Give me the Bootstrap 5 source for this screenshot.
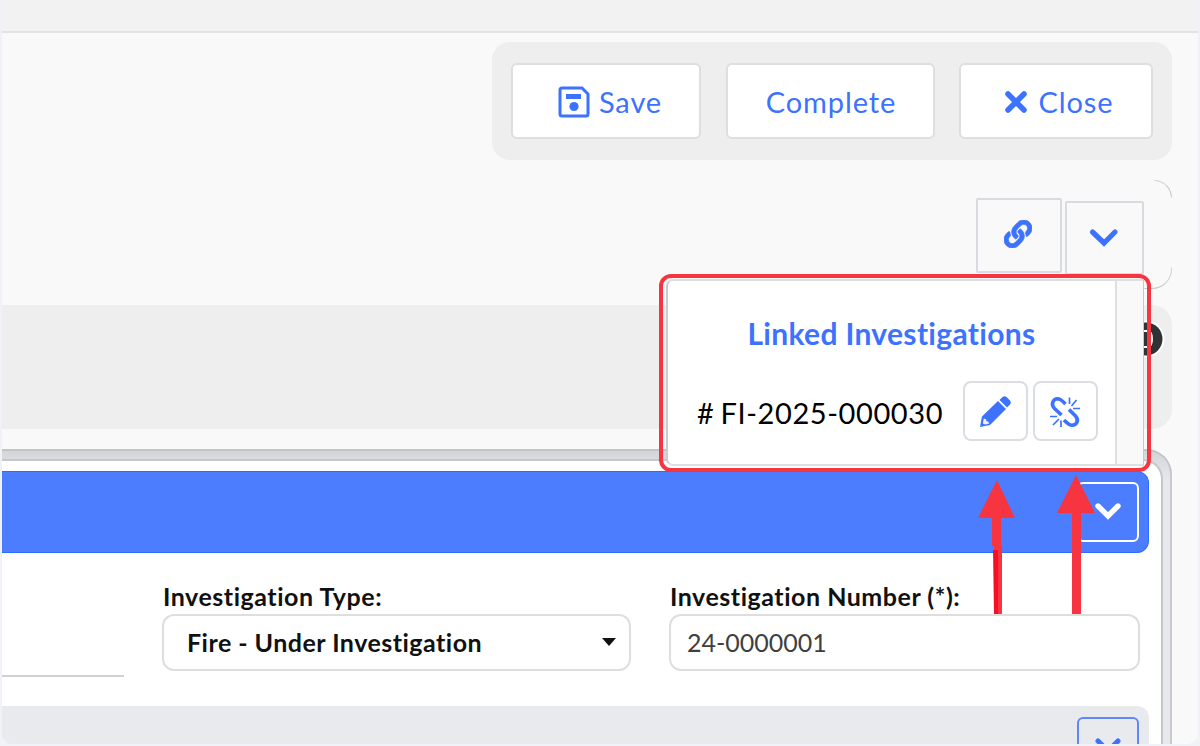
<!DOCTYPE html>
<html lang="en">
<head>
<meta charset="utf-8">
<meta name="viewport" content="width=device-width, initial-scale=1">
<title>Linked Investigations</title>
<link href="https://cdn.jsdelivr.net/npm/bootstrap@5.3.0/dist/css/bootstrap.min.css" rel="stylesheet">
<style>
  body { font-family: Lato, "Liberation Sans", sans-serif; background: #f1f1f8; height: 746px; overflow: hidden; color: #111; font-variant-ligatures: none; }
  .app-frame { margin: 0 2px; height: 744px; background: #f9f9f9; border-radius: 10px; }
  .top-strip { height: 33px; background: #f2f2f2; border-bottom: 2px solid #e2e2e2; }
  .action-bar { width: 680px; height: 118px; margin: 9px 26px 0 auto; padding: 21px 19px 0; background: #eee; border-radius: 18px; }
  .btn-action { height: 76px; background: #fff; border: 2px solid #dedede; border-radius: 6px; color: #3d72ff; font-size: 29px; letter-spacing: .9px; line-height: 1; padding: 0 0 0 2px; }
  .btn-action:hover { color: #3d72ff; background: #fff; border-color: #dedede; }
  .w-save { width: 190px; padding-left: 8px; } .w-complete { width: 209px; } .w-close { width: 194px; padding-left: 4px; }
  .link-row { height: 109px; margin: 20px 26px 0 0; padding: 18px 28px 0 0; }
  .arc { right: 0; width: 18px; height: 18px; border: 1px solid transparent; }
  .arc-top { top: 0; border-top-right-radius: 18px; border-top-color: #d2d2d2; border-right-color: #c4c4c4; }
  .arc-bottom { bottom: 0; width: 28px; height: 22px; border-bottom-right-radius: 20px; border-bottom-color: #c8c8c8; border-right-color: #d0d0d0; }
  .btn-square { background: #f9f9f9; border: 2px solid #d8dbdf; border-radius: 2px; padding: 0; }
  .btn-link-toggle { width: 86px; height: 75px; padding: 0 2px 4px 0; }
  .btn-expand { width: 79px; height: 74px; margin: 3px 0 0 3px; padding: 0 2px 2px 0; }
  .summary-band { height: 124px; margin: 16px 26px 0 0; background: #eee; border-radius: 0 20px 20px 0; }
  .info-dot { right: 7px; top: 15px; }
  .panel-shell { height: 295px; margin: 20px 26px 0 0; padding: 12px 11px 0 0; background: linear-gradient(#d2d4d8 0, #e8e9ee 34px); border-radius: 0 26px 0 0; box-shadow: inset 0 2px 0 #c2c4c6, inset -2px 0 0 #c9cacb; overflow: hidden; border-bottom-left-radius: 8px; }
  .panel-body { height: 283px; background: #fff; border-radius: 0 18px 0 0; padding: 10px 12px 0 0; box-shadow: 0 0 0 2px #c6c7c8; }
  .panel-head { height: 82px; background: #4d7dff; border: 1px solid #2b6bff; border-left: 0; border-radius: 0 12px 12px 0; padding: 10px 9px 0 0; }
  .btn-collapse { width: 62px; height: 60px; border: 2px solid #fff; border-radius: 6px; padding: 0 0 2px; }
  .fields { height: 153px; padding-top: 31px; }
  .stub-line { width: 122px; height: 93px; border-bottom: 2px solid #d1d1d1; margin-right: 38px; }
  .field-label { font-size: 25px; font-weight: 700; letter-spacing: .53px; line-height: 24px; height: 30px; padding-left: 1px; white-space: nowrap; }
  .field-box { height: 57px; border: 2px solid #dedede; border-radius: 12px; font-size: 25px; line-height: 28px; background: #fff; padding-bottom: 1px; }
  .field-type { width: 469px; margin-right: 38px; }
  .field-number { width: 471px; }
  .type-value { letter-spacing: .48px; margin-left: -1px; }
  .type-box { padding-right: 13px; }
  .number-value { color: #3f3f3f; }
  .next-section { height: 39px; background: #e9eaee; border-radius: 0 12px 0 0; padding: 11px 10px 0 0; overflow: hidden; }
  .btn-next { width: 62px; height: 60px; border: 2px solid #5f87ff; border-radius: 6px; padding: 0; }
  .popover-box { left: 659px; top: 274px; width: 492px; height: 198px; border: 4px solid #f73541; border-radius: 12px; padding: 1px 3px 2px; overflow: hidden; }
  .popover-inner { width: 451px; height: 187px; border: 2px solid #dddfe1; border-left-color: #c9cdd1; border-radius: 7px 0 0 7px; background: #fff; }
  .popover-rest { width: 27px; height: 187px; background: #f9f9f9; border-top: 2px solid #dddfe1; border-bottom: 2px solid #dddfe1; border-right: 1px solid #c8c9cb; }
  .popover-title { color: #3d72ff; font-size: 30px; font-weight: 700; letter-spacing: .33px; line-height: 36px; margin-top: 34px; white-space: nowrap; }
  .popover-row { margin: 30px 16px 0 29px; height: 60px; }
  .inv-number { font-size: 29px; letter-spacing: .6px; word-spacing: -2px; width: 266px; color: #000; white-space: nowrap; padding-top: 3px; }
  .btn-tool { width: 65px; height: 60px; border: 2px solid #dadde1; border-radius: 8px; background: #fff; padding: 2px 2px 0 0; }
  .tool-gap { margin-left: 5px; }
  .arrows { left: 970px; top: 470px; pointer-events: none; }
</style>
</head>
<body>
<main class="app-frame overflow-hidden">
  <header class="top-strip"></header>

  <div class="action-bar d-flex justify-content-between align-items-start">
    <button class="btn btn-action w-save d-flex align-items-center justify-content-center">
      <svg class="me-2" width="33" height="33" viewBox="0 0 33 33" fill="none" stroke="#3d72ff"><path d="M4 3h20l6 6v20a2 2 0 0 1-2 2H4a2 2 0 0 1-2-2V5a2 2 0 0 1 2-2z" stroke-width="3"/><path d="M8 11.500h15" stroke-width="5"/><circle cx="16" cy="21.500" r="4.600" fill="#3d72ff" stroke="none"/></svg><span>Save</span>
    </button>
    <button class="btn btn-action w-complete">Complete</button>
    <button class="btn btn-action w-close d-flex align-items-center justify-content-center">
      <svg class="me-2" width="28" height="28" viewBox="0 0 28 28" stroke="#3d72ff" stroke-width="5.500" stroke-linecap="round"><path d="M6 7l16 16M22 7L6 23"/></svg><span>Close</span>
    </button>
  </div>

  <div class="link-row position-relative d-flex justify-content-end align-items-start">
    <span class="arc arc-top position-absolute"></span>
    <span class="arc arc-bottom position-absolute"></span>
    <button class="btn btn-square btn-link-toggle d-flex align-items-center justify-content-center" aria-label="Linked records">
      <svg width="28" height="28" viewBox="0 0 512 512" fill="#3d72ff" stroke="#3d72ff" stroke-width="14"><path d="M326.612 185.391c59.747 59.809 58.927 155.698.36 214.590-.11.12-.24.25-.36.37l-67.200 67.200c-59.270 59.270-155.699 59.262-214.960 0-59.270-59.260-59.270-155.700 0-214.960l37.106-37.106c9.840-9.840 26.786-3.300 27.294 10.606.648 17.722 3.826 35.527 9.690 52.721 1.986 5.822.567 12.262-3.783 16.612l-13.087 13.087c-28.026 28.026-28.905 73.660-1.155 101.960 28.024 28.579 74.086 28.749 102.325.51l67.200-67.190c28.191-28.191 28.073-73.757 0-101.830-3.701-3.694-7.429-6.564-10.341-8.569a16.037 16.037 0 0 1-6.947-12.606c-.396-10.567 3.348-21.456 11.698-29.806l21.054-21.055c5.521-5.521 14.182-6.199 20.584-1.731a152.482 152.482 0 0 1 20.522 17.197zM467.547 44.449c-59.261-59.262-155.690-59.270-214.960 0l-67.200 67.200c-.12.12-.25.25-.36.37-58.566 58.892-59.387 154.781.36 214.590a152.454 152.454 0 0 0 20.521 17.196c6.402 4.468 15.064 3.789 20.584-1.731l21.054-21.055c8.350-8.350 12.094-19.239 11.698-29.806a16.037 16.037 0 0 0-6.947-12.606c-2.912-2.005-6.640-4.875-10.341-8.569-28.073-28.073-28.191-73.639 0-101.830l67.200-67.190c28.239-28.239 74.300-28.069 102.325.51 27.750 28.300 26.872 73.934-1.155 101.960l-13.087 13.087c-4.350 4.350-5.769 10.790-3.783 16.612 5.864 17.194 9.042 34.999 9.690 52.721.509 13.906 17.454 20.446 27.294 10.606l37.106-37.106c59.271-59.259 59.271-155.699.001-214.959z"/></svg>
    </button>
    <button class="btn btn-square btn-expand d-flex align-items-center justify-content-center" aria-label="Expand">
      <svg width="32" height="24" viewBox="0 0 32 24" fill="none" stroke="#3d72ff" stroke-width="5.200" stroke-linecap="round"><path d="M4.500 7L16 18 27 7"/></svg>
    </button>
  </div>

  <section class="summary-band position-relative">
    <svg class="info-dot position-absolute" width="38" height="38" viewBox="0 0 38 38"><circle cx="19" cy="19" r="18.500" fill="#fff"/><circle cx="19" cy="19" r="16.500" fill="#2f3336"/><path d="M16 11h5q4 1 4 8t-4 8h-5" fill="none" stroke="#fff" stroke-width="2"/></svg>
  </section>

  <section class="panel-shell">
    <div class="panel-body">
      <div class="panel-head d-flex justify-content-end align-items-start">
        <button class="btn btn-collapse d-flex align-items-center justify-content-center" aria-label="Collapse">
          <svg width="32" height="24" viewBox="0 0 32 24" fill="none" stroke="#fff" stroke-width="5.400" stroke-linecap="round"><path d="M6 7l10 10L26 7"/></svg>
        </button>
      </div>
      <div class="fields d-flex align-items-start">
        <div class="stub-line"></div>
        <div class="field-type">
          <div class="field-label">Investigation Type:</div>
          <div class="field-box type-box d-flex align-items-center justify-content-between ps-4 fw-bold"><span class="type-value">Fire - Under Investigation</span>
            <svg width="14" height="8" viewBox="0 0 14 8"><path d="M0 0h14L7 8z" fill="#111"/></svg></div>
        </div>
        <div class="field-number">
          <div class="field-label">Investigation Number (*):</div>
          <div class="field-box number-value d-flex align-items-center ps-3">24-0000001</div>
        </div>
      </div>
      <div class="next-section d-flex justify-content-end align-items-start">
        <button class="btn btn-next d-flex align-items-center justify-content-center flex-shrink-0" aria-label="Expand section">
          <svg width="32" height="24" viewBox="0 0 32 24" fill="none" stroke="#3d72ff" stroke-width="5" stroke-linecap="round"><path d="M6 6l10 10L26 6"/></svg>
        </button>
      </div>
    </div>
  </section>
</main>

<div class="popover-box position-absolute d-flex">
  <div class="popover-inner flex-shrink-0">
    <div class="popover-title text-center">Linked Investigations</div>
    <div class="popover-row d-flex align-items-center">
      <span class="inv-number flex-shrink-0"># FI-2025-000030</span>
      <button class="btn btn-tool flex-shrink-0 d-flex align-items-center justify-content-center" aria-label="Edit">
        <svg width="34" height="34" viewBox="0 0 34 34" fill="#3d72ff"><path d="M2 32L4 21.500 20 6l8 8L12 30z"/><path d="M21.500 5L24.500 2q2-1.500 4 0l3.500 3.500q1.500 2 0 4L29 12.500z"/><path d="M4.800 28.500l1-5 2.200.800.500 2 2 .500.700 1.700-4 1z" fill="#fff" opacity=".9"/></svg>
      </button>
      <button class="btn btn-tool tool-gap flex-shrink-0 d-flex align-items-center justify-content-center" aria-label="Unlink">
        <svg width="32" height="32" viewBox="0 0 32 32" fill="none" stroke="#3d72ff"><path d="M12.500 19l-7-6.500C1.500 8.500 4 3 8.500 2.800c3 0 5 2.200 8 5.200M20 13.500l6.500 6.500c4 4.500 1 9-3.500 9.200-3 0-5.500-2.700-8-5.200" stroke-width="3.600"/><path d="M20.500 8V1.500M22.500 10l5-6M24 12.500h7M1 20.500h7M4 29l6-6M12 24.500V31" stroke-width="1.700"/></svg>
      </button>
    </div>
  </div>
  <div class="popover-rest flex-shrink-0"></div>
</div>

<svg class="arrows position-absolute" width="140" height="146" viewBox="0 0 140 146" fill="#f73541" aria-hidden="true">
  <path d="M27 10L45 48H31V76H32V144H24V76H22V48H8z"/>
  <path d="M23 80h5v64h-4z" fill="#fa0d27"/>
  <path d="M106 5L125 43H111V144H102V43H87z"/>
</svg>
<script src="https://cdn.jsdelivr.net/npm/bootstrap@5.3.0/dist/js/bootstrap.bundle.min.js"></script>
</body>
</html>
